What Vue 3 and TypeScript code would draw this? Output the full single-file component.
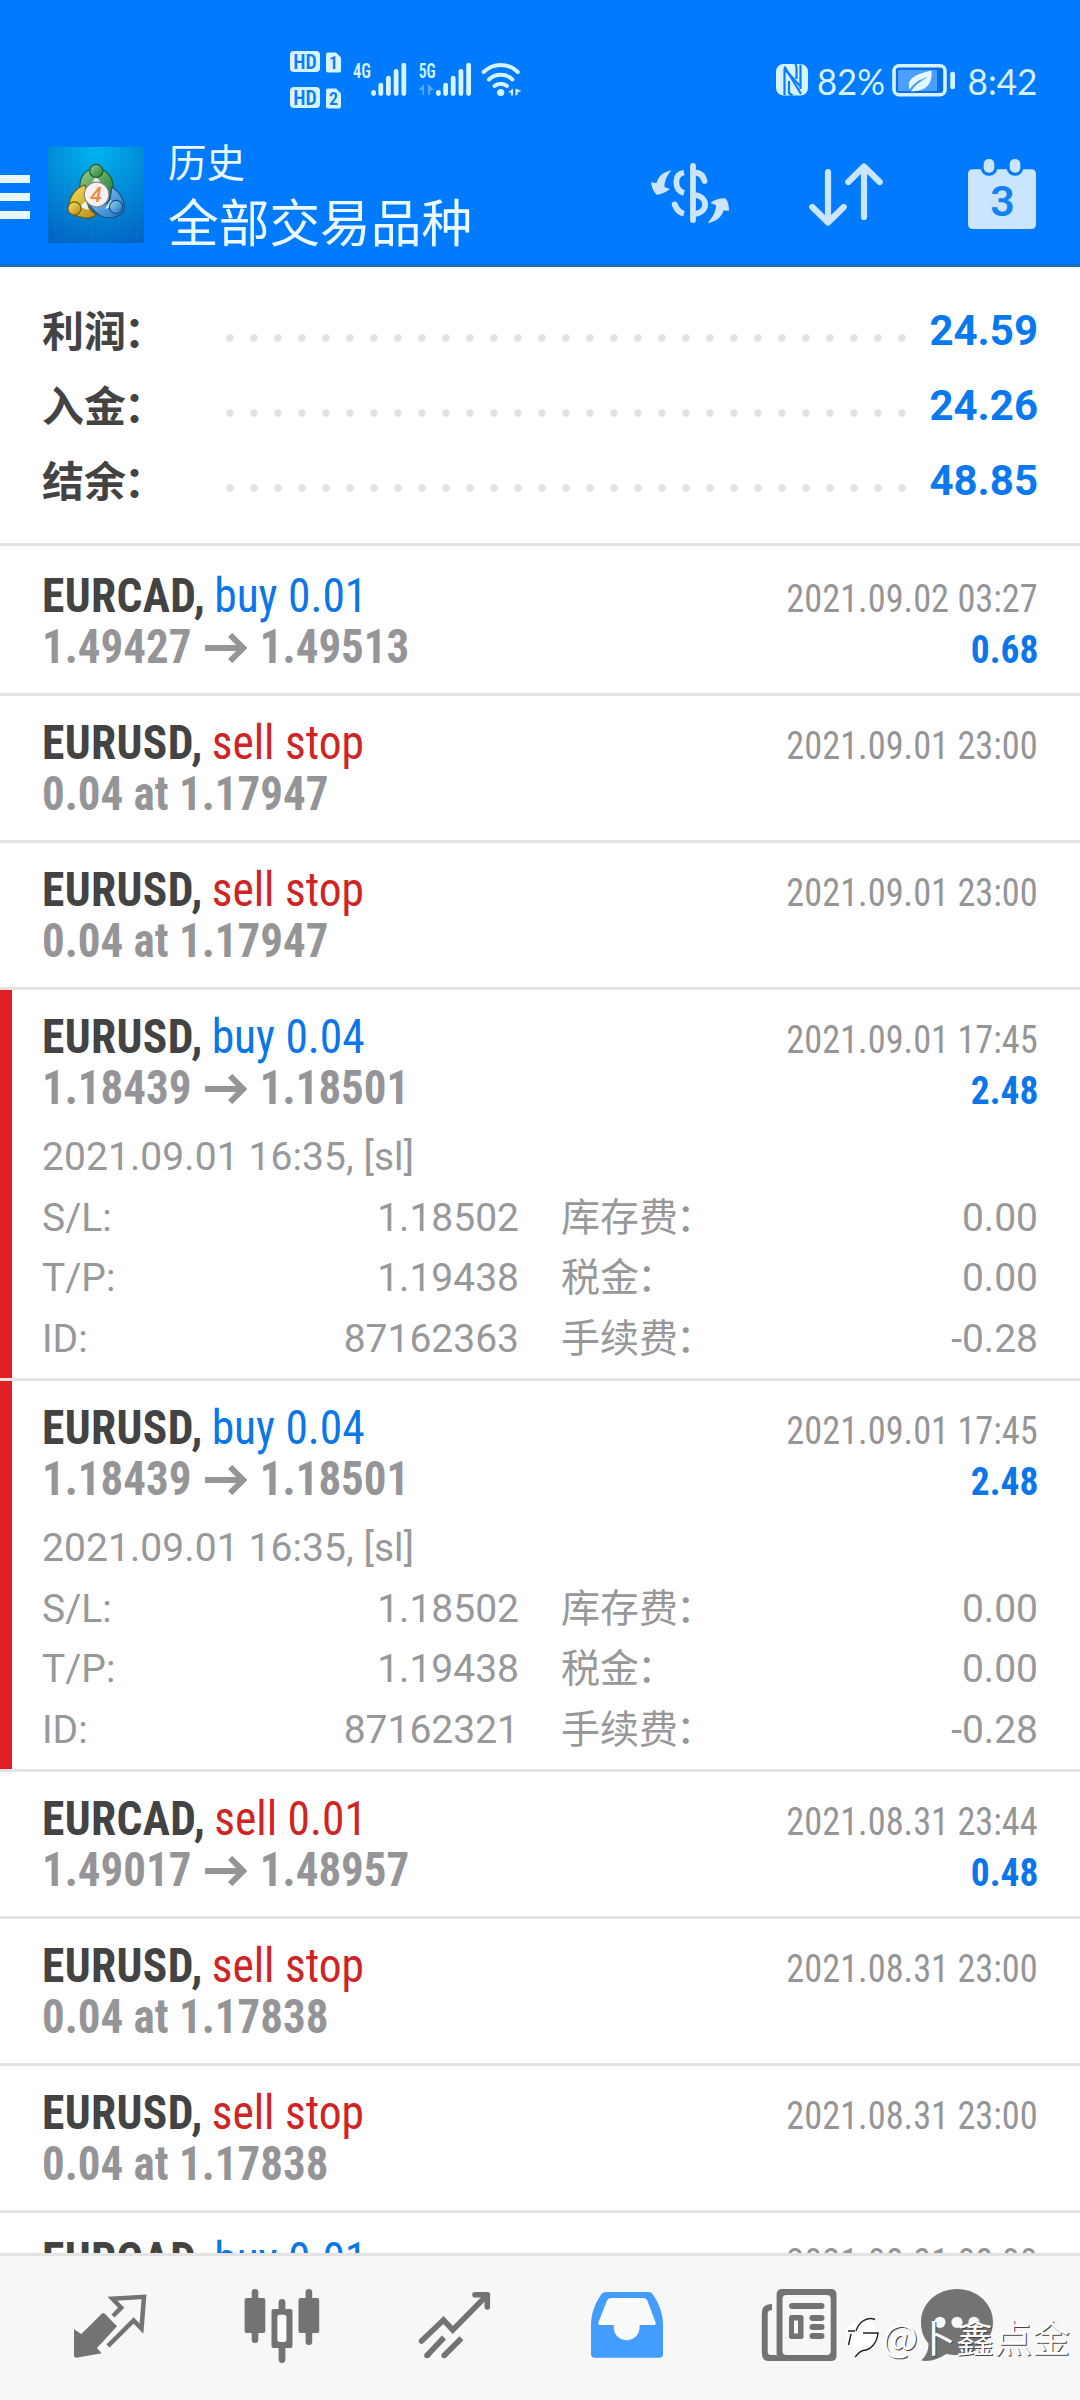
<script setup lang="ts">
interface Summary {
  label: string
  value: string
}

interface Deal {
  symbol: string
  action: string
  side: 'buy' | 'sell'
  time: string
  from?: string
  to?: string
  order?: string
  profit?: string
  opened?: string
  details?: [string, string, string, string][]
}

const summary: Summary[] = [
  { label: '利润', value: '24.59' },
  { label: '入金', value: '24.26' },
  { label: '结余', value: '48.85' },
]

const stopDetails = (id: string): [string, string, string, string][] => [
  ['S/L:', '1.18502', '库存费', '0.00'],
  ['T/P:', '1.19438', '税金', '0.00'],
  ['ID:', id, '手续费', '-0.28'],
]

const deals: Deal[] = [
  { symbol: 'EURCAD', action: 'buy 0.01', side: 'buy', time: '2021.09.02 03:27', from: '1.49427', to: '1.49513', profit: '0.68' },
  { symbol: 'EURUSD', action: 'sell stop', side: 'sell', time: '2021.09.01 23:00', order: '0.04 at 1.17947' },
  { symbol: 'EURUSD', action: 'sell stop', side: 'sell', time: '2021.09.01 23:00', order: '0.04 at 1.17947' },
  { symbol: 'EURUSD', action: 'buy 0.04', side: 'buy', time: '2021.09.01 17:45', from: '1.18439', to: '1.18501', profit: '2.48', opened: '2021.09.01 16:35, [sl]', details: stopDetails('87162363') },
  { symbol: 'EURUSD', action: 'buy 0.04', side: 'buy', time: '2021.09.01 17:45', from: '1.18439', to: '1.18501', profit: '2.48', opened: '2021.09.01 16:35, [sl]', details: stopDetails('87162321') },
  { symbol: 'EURCAD', action: 'sell 0.01', side: 'sell', time: '2021.08.31 23:44', from: '1.49017', to: '1.48957', profit: '0.48' },
  { symbol: 'EURUSD', action: 'sell stop', side: 'sell', time: '2021.08.31 23:00', order: '0.04 at 1.17838' },
  { symbol: 'EURUSD', action: 'sell stop', side: 'sell', time: '2021.08.31 23:00', order: '0.04 at 1.17838' },
  { symbol: 'EURCAD', action: 'buy 0.01', side: 'buy', time: '2021.08.31 08:00', from: '1.49017', to: '1.48957', profit: '0.48' },
]

const bars = [
  { x: 0, top: 45 },
  { x: 7.2, top: 37.7 },
  { x: 14.8, top: 30.7 },
  { x: 22.5, top: 24 },
  { x: 30.2, top: 17.7 },
]
</script>

<template>
  <div class="screen">
    <header class="header">
      <div class="status">
        <svg class="status-left" width="250" height="70" viewBox="0 0 250 70">
          <g fill="#d6f4ff">
            <rect x="10" y="6" width="30" height="21" rx="4" />
            <rect x="10" y="42" width="30" height="21" rx="4" />
            <path d="M48 7.500H56L61 12.500V25.500Q61 27.500 59 27.500H48Q46 27.500 46 25.500V9.500Q46 7.500 48 7.500Z" />
            <path d="M48 43.500H56L61 48.500V61.500Q61 63.500 59 63.500H48Q46 63.500 46 61.500V45.500Q46 43.500 48 43.500Z" />
            <text x="73" y="33" font-size="21" font-weight="600" textLength="18" lengthAdjust="spacingAndGlyphs">4G</text>
            <text x="138.700" y="33" font-size="21" font-weight="600" textLength="17" lengthAdjust="spacingAndGlyphs">5G</text>
            <rect v-for="b in bars" :key="'a' + b.x" :x="91.200 + b.x" :y="b.top" width="4.800" :height="51 - b.top" rx="2.400" />
            <rect v-for="b in bars" :key="'b' + b.x" :x="156 + b.x" :y="b.top" width="4.800" :height="51 - b.top" rx="2.400" />
            <circle cx="220.700" cy="47.500" r="3.600" />
            <path d="M233 43.500V50.500H231V47.500H228L233 43.500ZM235.500 43.500V50.500L237.500 50V47.500L241.500 46Z" />
          </g>
          <g fill="#0a7cf6" font-size="19.500" font-weight="600">
            <text x="13.300" y="23.500" textLength="23.500" lengthAdjust="spacingAndGlyphs">HD</text>
            <text x="13.300" y="59.500" textLength="23.500" lengthAdjust="spacingAndGlyphs">HD</text>
            <text x="49" y="24" font-size="18">1</text>
            <text x="49" y="60" font-size="18">2</text>
          </g>
          <path d="M144 39V50H142.500V45H138.500ZM148 39V50H150V46L153.500 44.500Z" fill="#5aa9ff" />
          <g fill="none" stroke="#d6f4ff" stroke-width="4" stroke-linecap="round">
            <path d="M203.700 27A24 24 0 0 1 237.700 27" />
            <path d="M209 34.500A17 17 0 0 1 232.400 34.500" />
            <path d="M214.500 41A9.500 9.500 0 0 1 227 41" />
          </g>
        </svg>
        <svg class="status-right" width="280" height="60" viewBox="0 0 280 60">
          <rect x="6" y="9" width="32" height="31.500" rx="7.500" fill="#d6f4ff" />
          <g fill="none" stroke="#0a7cf6" stroke-width="2.200" stroke-linejoin="round">
            <path d="M14.500 40V14L31 32" />
            <path d="M14.500 11.500L31 39" />
            <path d="M30.500 9.500V34" />
            <path d="M22.500 40.500L19 38V26" />
            <path d="M25.500 9L26.500 12V24" />
          </g>
          <text x="47" y="40" font-size="37.500" fill="#d6f4ff" textLength="68" lengthAdjust="spacingAndGlyphs">82%</text>
          <rect x="124" y="10.700" width="51" height="29" rx="5" fill="#0a6fe6" stroke="#d6f4ff" stroke-width="3.600" />
          <rect x="128" y="15" width="39" height="21" fill="#4a9ff8" />
          <rect x="180.300" y="16.700" width="4.700" height="17.600" rx="2" fill="#d6f4ff" />
          <path d="M161.300 15.500C163 26 158 34.500 147 36L141 36.500C145 30 151 26 158 22C150 24 144 28 139.500 34.500C136 22 148 19 161.300 15.500Z" fill="#e6f8ff" />
          <text x="197.500" y="40" font-size="37.500" fill="#d6f4ff" textLength="70" lengthAdjust="spacingAndGlyphs">8:42</text>
        </svg>
      </div>
      <div class="toolbar">
        <div class="menu"><i></i><i></i><i></i></div>
        <svg class="logo" width="96" height="96" viewBox="0 0 96 96">
          <defs>
            <radialGradient id="lgBack" cx="0.5" cy="0.05" r="1">
              <stop offset="0" stop-color="#00b4ee" />
              <stop offset="0.5" stop-color="#008ad8" />
              <stop offset="1" stop-color="#0066c4" />
            </radialGradient>
            <linearGradient id="lgGreen" x1="0" y1="0" x2="1" y2="1">
              <stop offset="0" stop-color="#9bd08a" /><stop offset="1" stop-color="#1f7a35" />
            </linearGradient>
            <linearGradient id="lgGold" x1="0" y1="0" x2="1" y2="1">
              <stop offset="0" stop-color="#f7e45c" /><stop offset="1" stop-color="#b88a14" />
            </linearGradient>
            <linearGradient id="lgBlue" x1="0" y1="0" x2="1" y2="1">
              <stop offset="0" stop-color="#9bd4f7" /><stop offset="1" stop-color="#1a6fc0" />
            </linearGradient>
          </defs>
          <rect width="96" height="96" fill="url(#lgBack)" />
          <path d="M8 0V96M17 0V96M26 0V96M35 0V96M44 0V96M53 0V96M62 0V96M71 0V96M80 0V96M89 0V96M0 8H96M0 17H96M0 26H96M0 35H96M0 44H96M0 53H96M0 62H96M0 71H96M0 80H96M0 89H96" stroke="#fff" stroke-opacity="0.040" stroke-width="1" />
          <g stroke-width="1.200">
            <path d="M32 42C31 30 37 22 48 21.500C59 22 66 31 65 42L62 51C57 43 53 40 48 40C43 40 38 42 35 47Z" fill="url(#lgGreen)" stroke="#1c5b34" />
            <path d="M37 38C29 40 22 48 21 58C20 65 27 70 38 71C43 71 46 70 48 68C41 63 38 57 39 49Z" fill="url(#lgGold)" stroke="#6f5a18" />
            <path d="M64 40C73 46 77 54 76 63C73 70 64 72 55 70C48 67 42 61 41 54C48 60 58 60 62 52Z" fill="url(#lgBlue)" stroke="#174f86" />
            <path d="M31 60L41 63L38 54ZM66 59L57 62L63 53ZM48 29L44 36H53Z" fill="#e9f4f0" />
            <circle cx="48.300" cy="24" r="6.600" fill="url(#lgGreen)" stroke="#1c5b34" />
            <circle cx="26.500" cy="61.500" r="6.600" fill="url(#lgGold)" stroke="#6f5a18" />
            <circle cx="68" cy="60" r="6.600" fill="url(#lgBlue)" stroke="#174f86" />
            <circle cx="48.600" cy="47.500" r="12.300" fill="#f4f1f2" stroke="#8a8580" />
          </g>
          <text x="48" y="54.500" text-anchor="middle" font-size="21" font-weight="500" font-style="italic" fill="#f08a3c">4</text>
        </svg>
        <div class="titles">
          <div class="subtitle">历史</div>
          <div class="title">全部交易品种</div>
        </div>
        <svg class="tool dollar" width="80" height="80" viewBox="0 0 80 80">
          <g fill="none" stroke="#cce5ff" stroke-width="5.800">
            <path d="M43 11V65" stroke-linecap="round" />
            <path d="M34 17.500C28.500 18.500 26.300 22 26.300 27C26.300 32.500 29 36.500 34 38" />
            <path d="M45 17.500C50.500 18 53.500 21 54.500 26" stroke-linecap="round" />
            <path d="M45 40C58.500 42 58.500 57 45 58.800" />
            <path d="M24.800 49.500C26.500 54.500 29 57.500 34 58.800" />
            <path d="M24.700 49.500h0.010" stroke-linecap="round" />
          </g>
          <g fill="#cce5ff">
            <path d="M21.700 15.300C13 17 8.500 21 6.500 28L1 27.300C1.500 32 3.500 37 6.500 39.700C11 39.500 16 37.500 20 34L14.500 32C14.500 26 17 20 21.700 15.300Z" />
            <path d="M57.700 67.700C65 67.500 72 62 73.500 55.500L79 55.700C79 51 78 46 75.500 43.300C70 43 64 44.500 60.500 48L66 50.300C66 56 63 62 57.700 67.700Z" />
          </g>
        </svg>
        <svg class="tool sort" width="80" height="80" viewBox="0 0 80 80" fill="none" stroke="#cce5ff" stroke-width="6.200" stroke-linecap="round" stroke-linejoin="round">
          <path d="M23 17V67.500M7.300 52L23 67.500L38.700 52" />
          <path d="M59 62V11.500M43.300 27L59 11.500L74.700 27" />
        </svg>
        <svg class="tool" width="80" height="80" viewBox="0 0 80 80">
          <rect x="5" y="14.300" width="68" height="59.700" rx="4.500" fill="#cce5ff" />
          <g fill="#cce5ff" stroke="#007aff" stroke-width="6" paint-order="stroke">
            <rect x="20.700" y="4" width="10.600" height="13.800" rx="5" />
            <rect x="46.700" y="4" width="10.600" height="13.800" rx="5" />
          </g>
          <text x="39.500" y="61" text-anchor="middle" font-size="43" font-weight="600" fill="#1383f2">3</text>
        </svg>
      </div>
    </header>

    <main class="list">
      <section class="summary">
        <div v-for="s in summary" :key="s.label" class="sum-row">
          <span class="sum-label">{{ s.label }}<span class="colon">：</span></span>
          <span class="dots"></span>
          <span class="sum-value">{{ s.value }}</span>
        </div>
      </section>

      <article v-for="(d, i) in deals" :key="i" class="deal" :class="{ open: d.details }">
        <div class="line">
          <div class="name"><b>{{ d.symbol }},</b> <span class="action" :class="d.side">{{ d.action }}</span></div>
          <time class="time">{{ d.time }}</time>
        </div>
        <div class="line">
          <div class="price">
            <template v-if="d.from">{{ d.from }}<svg class="arrow" width="45" height="30" viewBox="0 0 42 30" preserveAspectRatio="none"><path d="M0 15H38M25 2L38 15L25 28" fill="none" stroke="#959597" stroke-width="6" /></svg>{{ d.to }}</template>
            <template v-else>{{ d.order }}</template>
          </div>
          <div v-if="d.profit" class="profit">{{ d.profit }}</div>
        </div>
        <div v-if="d.details" class="details">
          <div class="opened">{{ d.opened }}</div>
          <div v-for="r in d.details" :key="r[0]" class="drow">
            <div class="pair"><span>{{ r[0] }}</span><span>{{ r[1] }}</span></div>
            <div class="pair"><span class="cjk">{{ r[2] }}<span class="colon">：</span></span><span>{{ r[3] }}</span></div>
          </div>
        </div>
      </article>
    </main>

    <nav class="tabs">
      <svg width="80" height="80" viewBox="0 0 80 80">
        <path d="M4 44.300L11.300 49L32 28.500Q33.300 27.300 34.600 28.500L47 41.300L27 63L31.600 68.300L6.400 72.700Q4 72.700 4 70.500Z" fill="#737373" />
        <path d="M43 31L51.200 22.700L42.500 13.800L74 11.800L71.500 43.700L63.600 35.500L38 61" fill="none" stroke="#737373" stroke-width="4.500" />
      </svg>
      <svg width="80" height="80" viewBox="0 0 80 80" fill="#737373">
        <rect x="2.600" y="13" width="20.700" height="35" rx="2" />
        <rect x="9.700" y="4" width="6.600" height="54" rx="3.300" />
        <rect x="56.500" y="13" width="20.700" height="35" rx="2" />
        <rect x="63.600" y="4" width="6.600" height="56" rx="3.300" />
        <rect x="36.600" y="14" width="6.800" height="64" rx="3.400" />
        <rect x="29.500" y="24" width="21" height="39" rx="2" />
        <rect x="35.400" y="29.700" width="9" height="27.300" rx="2.500" fill="#fff" />
      </svg>
      <svg width="80" height="80" viewBox="0 0 80 80" fill="none" stroke="#737373" stroke-width="5.600">
        <path d="M6.500 56L28.500 35L37.800 45L72.200 10" stroke-linecap="round" />
        <path d="M60 9.700H72.300V22" stroke-linecap="round" stroke-linejoin="round" />
        <path d="M12 70.500L29 52.500M29.200 70.500L46.400 53.200" />
        <path d="M12 70.500h0.010M29.200 70.500h0.010" stroke-linecap="round" />
      </svg>
      <svg width="80" height="80" viewBox="0 0 80 80">
        <path d="M20 7H61.500Q64 7 65.500 9C72 18 76 29 76 40V69Q76 72.700 72.300 72.700H7.700Q4 72.700 4 69V40C4 29 8 18 14.500 9Q16 7 20 7Z" fill="#429dff" />
        <path d="M24 13H56.500Q59 13 60.300 15.500L68.800 38Q69.300 40 67.300 40H52.600V42C52.600 59.500 26.700 59.500 26.700 42V40H13Q10.800 40 11.400 37.500L20 15.500Q21.300 13 24 13Z" fill="#fafafa" />
      </svg>
      <svg width="80" height="80" viewBox="0 0 80 80" fill="#737373">
        <path d="M13 19V25Q8.700 25 8.700 29V67Q8.700 70 12 70H17V76H10Q2.800 76 2.800 68V28Q2.800 19 13 19Z" />
        <path fill-rule="evenodd" d="M23 4H72Q77.500 4 77.500 9.500V70.500Q77.500 76 72 76H15L17.600 70V9.500Q17.600 4 23 4ZM27.500 10Q23.500 10 23.500 14V66Q23.500 70 27.500 70H67.700Q71.700 70 71.700 66V14Q71.700 10 67.700 10Z" />
        <rect x="30" y="18" width="35.500" height="6" rx="3" />
        <rect x="30" y="30" width="14.500" height="24" rx="2.500" />
        <rect x="35" y="35.500" width="4" height="13" fill="#f7f7f7" />
        <rect x="50.500" y="30" width="15" height="6" rx="3" />
        <rect x="50.500" y="39" width="15" height="6" rx="3" />
        <rect x="50.500" y="48" width="15" height="6" rx="3" />
      </svg>
      <svg width="80" height="80" viewBox="0 0 80 80">
        <path d="M39 4C59 4 75 18.500 75 37C75 55.500 59 70 39 70C35 70 31 69.500 28 69C21 74 12 77 3 75.500C8.500 71 10.500 65 10.500 58.500C5.500 53 3 45.500 3 37C3 18.500 19 4 39 4Z" fill="#737373" />
        <g fill="#f7f7f7"><circle cx="22" cy="37.300" r="5.600" /><circle cx="39" cy="37.300" r="5.600" /><circle cx="56" cy="37.300" r="5.600" /></g>
      </svg>
      <div class="watermark">
        <svg width="36" height="44" viewBox="0 0 36 44">
          <circle cx="17" cy="21" r="16" fill="#fff" />
          <path d="M11 17C14 7 23 2.500 30 5.500M3 17H10M6 20L3.500 31M18 19H33C32 29 26 36 18 36.500C15 37 13 40 10 43" fill="none" stroke="#222" stroke-width="1.400" />
        </svg>
        <span>@卜鑫点金</span>
      </div>
    </nav>
  </div>
</template>

<style>
body {
  margin: 0;
  background: #fff;
}
</style>

<style scoped>
.screen {
  width: 1080px;
  height: 2400px;
  overflow: hidden;
  display: flex;
  flex-direction: column;
  background: #fff;
  color: #434343;
  font-family: Roboto, "Noto Sans CJK SC", sans-serif;
}

.header {
  flex: none;
  height: 267px;
  box-sizing: border-box;
  background: #007aff;
  border-bottom: 3px solid #1a6dc0;
}

.status {
  display: flex;
  justify-content: space-between;
  padding: 45px 30px 0 280px;
  height: 95px;
  box-sizing: border-box;
}

.status-left {
  font-family: "Roboto Condensed", sans-serif;
}

.status-right {
  margin-top: 10px;
  font-family: Lato, sans-serif;
}

.toolbar {
  display: flex;
  align-items: flex-start;
  padding-top: 45px;
}

.menu {
  display: flex;
  flex-direction: column;
  gap: 10px;
  width: 48px;
  padding-top: 35px;
}

.menu i {
  width: 30px;
  height: 8px;
  background: #e8f8ff;
}

.logo {
  margin-top: 7px;
}

.titles {
  width: 481px;
  margin-top: -4px;
  padding-left: 24px;
  box-sizing: border-box;
  color: #eafaff;
  font-family: "Noto Sans CJK SC", sans-serif;
  white-space: nowrap;
}

.subtitle {
  font-size: 38.500px;
  line-height: 48px;
}

.title {
  font-size: 50.700px;
  line-height: 72px;
}

.tool {
  margin-top: 15px;
}

.dollar {
  margin-left: 25px;
}

.sort {
  margin: 15px 78px 0 75px;
}

.list {
  flex: 1;
  min-height: 0;
  overflow: hidden;
}

.summary {
  height: 279px;
  box-sizing: border-box;
  margin-bottom: 3px;
  padding: 26px 42px 0;
  border-bottom: 3px solid #e3e3e3;
}

.sum-row {
  display: flex;
  align-items: center;
  height: 75px;
  line-height: 75px;
  font-size: 42px;
  font-weight: 700;
}

.sum-label {
  width: 176px;
  margin-top: -5px;
  font-family: "Noto Sans CJK SC", sans-serif;
}

.sum-label .colon {
  margin-left: -2px;
}

.dots {
  width: 696px;
  height: 8px;
  margin-top: 15px;
  background: radial-gradient(circle at 12px 4px, #e2e2e2 3.300px, transparent 4.200px) 0 0 / 24px 8px repeat-x;
}

.sum-value {
  margin-left: auto;
  color: #0a78ee;
}

.deal {
  height: 147px;
  box-sizing: border-box;
  padding: 21px 42px 0;
  border-bottom: 3px solid #e3e3e3;
}

.deal.open {
  height: 391px;
  background: linear-gradient(#e02020, #e02020) 0 0 / 12px 100% no-repeat;
  background-clip: padding-box;
}

.line {
  display: flex;
  justify-content: space-between;
  align-items: baseline;
  height: 51px;
  line-height: 51px;
  font-family: "Roboto Condensed", Roboto, sans-serif;
  font-size: 48px;
  white-space: nowrap;
}

.name {
  transform: scaleX(0.947);
  transform-origin: left;
}

.name b {
  letter-spacing: 0.400px;
}

.action {
  margin-left: -1.500px;
}

.buy {
  color: #0a76e8;
}

.sell {
  color: #d02424;
}

.price {
  font-weight: 700;
  color: #959597;
  transform: scaleX(0.937);
  transform-origin: left;
}

.arrow {
  margin: 0 14px;
}

.time {
  font-size: 39px;
  color: #959597;
  transform: scaleX(0.932);
  transform-origin: right;
}

.profit {
  font-size: 39px;
  font-weight: 700;
  color: #0a76ea;
  transform: scaleX(0.96);
  transform-origin: right;
}

.details {
  margin-top: 14px;
  font-size: 39px;
  line-height: 60.700px;
  color: #98989a;
}

.opened {
  letter-spacing: 0.080px;
}

.drow {
  display: grid;
  grid-template-columns: 1fr 1fr;
  column-gap: 42px;
  height: 60.700px;
}

.pair {
  display: flex;
  justify-content: space-between;
  align-items: baseline;
}

.cjk {
  font-family: "Noto Sans CJK SC", sans-serif;
  line-height: 50px;
}

.cjk .colon {
  margin-left: -2px;
}

.tabs {
  position: relative;
  flex: none;
  display: grid;
  grid-template-columns: repeat(5, 172.300px) 146px;
  justify-items: center;
  height: 147px;
  box-sizing: border-box;
  padding: 29px 0 0 24px;
  background: #f7f7f7;
  border-top: 3px solid #e3e3e3;
}

.watermark {
  position: absolute;
  left: 845px;
  top: 58px;
  display: flex;
  align-items: center;
  gap: 1px;
  font-family: "Noto Sans CJK SC", sans-serif;
  font-size: 38px;
  line-height: 44px;
  color: #fff;
  white-space: nowrap;
  text-shadow: 1px 1px 0 #444;
}
</style>
